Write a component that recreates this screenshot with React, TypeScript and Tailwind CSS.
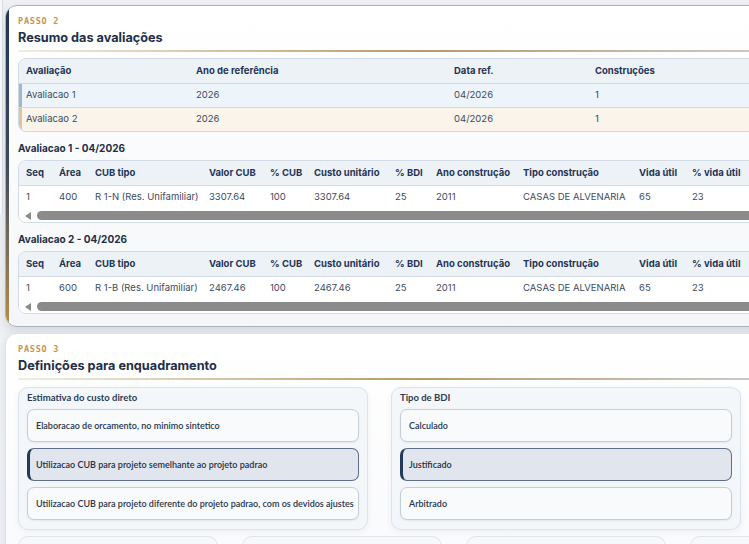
import React from "react";

const summaryCols = [
  { label: "Avaliação", w: "w-[170px]" },
  { label: "Ano de referência", w: "w-[258px]" },
  { label: "Data ref.", w: "w-[141px]" },
  { label: "Construções", w: "w-[180px]" },
];

const summaryRows = [
  { cells: ["Avaliacao 1", "2026", "04/2026", "1"], bg: "bg-[#eef5fa]", bar: "bg-[#9db8cf]" },
  { cells: ["Avaliacao 2", "2026", "04/2026", "1"], bg: "bg-[#faf4ea]", bar: "bg-[#dcc69f]" },
];

const detailCols = [
  { label: "Seq", w: "w-[33px]" },
  { label: "Área", w: "w-[36px]" },
  { label: "CUB tipo", w: "w-[114px]" },
  { label: "Valor CUB", w: "w-[61px]" },
  { label: "% CUB", w: "w-[44px]" },
  { label: "Custo unitário", w: "w-[81px]" },
  { label: "% BDI", w: "w-[41px]" },
  { label: "Ano construção", w: "w-[87px]" },
  { label: "Tipo construção", w: "w-[116px]" },
  { label: "Vida útil", w: "w-[53px]" },
  { label: "% vida útil", w: "w-[70px]" },
];

const evaluations = [
  {
    title: "Avaliacao 1 - 04/2026",
    row: ["1", "400", "R 1-N (Res. Unifamiliar)", "3307.64", "100", "3307.64", "25", "2011", "CASAS DE ALVENARIA", "65", "23"],
  },
  {
    title: "Avaliacao 2 - 04/2026",
    row: ["1", "600", "R 1-B (Res. Unifamiliar)", "2467.46", "100", "2467.46", "25", "2011", "CASAS DE ALVENARIA", "65", "23"],
  },
];

const custoOptions = [
  "Elaboracao de orcamento, no minimo sintetico",
  "Utilizacao CUB para projeto semelhante ao projeto padrao",
  "Utilizacao CUB para projeto diferente do projeto padrao, com os devidos ajustes",
];

const bdiOptions = ["Calculado", "Justificado", "Arbitrado"];

function StepHeader({ step, title }: { step: string; title: string }) {
  return (
    <div>
      <p className="font-['DejaVu_Sans_Mono',monospace] text-[8.5px] font-bold tracking-[0.09em] text-[#c8934c] leading-[12px]">
        PASSO {step}
      </p>
      <h2 className="mt-[2px] text-[12.7px] font-bold leading-[18px] text-[#1f2f47]">{title}</h2>
      <div className="mt-[3px] h-[2px] w-full bg-gradient-to-r from-[#f3ede2] via-[#b89a6a] to-[#cdd3dc]" />
    </div>
  );
}

function FakeScrollbar() {
  return (
    <div className="flex h-[13px] items-center gap-[6px] bg-white pl-[6px]">
      <div className="h-0 w-0 border-y-[4px] border-r-[6px] border-y-transparent border-r-[#8a8a8a]" />
      <div className="h-[9px] flex-1 rounded-l-full bg-[#8b8b8b]" />
    </div>
  );
}

function Option({ text, selected }: { text: string; selected?: boolean }) {
  return (
    <div
      className={
        selected
          ? "flex h-[33px] items-center rounded-[7px] border border-[#5e6f87] border-l-[3px] border-l-[#233a5b] bg-[#e1e6ee] pl-[6px] text-[9px] font-semibold text-[#1f2f47]"
          : "flex h-[33px] items-center rounded-[7px] border border-[#c3cedb] bg-[#f8fafc] pl-[8px] text-[9px] font-semibold text-[#27354d] shadow-[0_1px_2px_rgba(30,50,80,0.08)]"
      }
    >
      {text}
    </div>
  );
}

function ChoiceBox({ title, options, selected }: { title: string; options: string[]; selected: number }) {
  return (
    <div className="flex flex-col gap-[5px] rounded-[10px] border border-[#dbe3ec] bg-[#f4f7fa] px-[8px] pb-[9px] pt-[4px] shadow-[0_2px_6px_rgba(30,50,80,0.06)]">
      <p className="text-[9.5px] font-bold leading-[12px] text-[#2b3b55]">{title}</p>
      <div className="flex flex-col gap-[6px]">
        {options.map((o, i) => (
          <Option key={o} text={o} selected={i === selected} />
        ))}
      </div>
    </div>
  );
}

export default function App() {
  return (
    <div className="relative h-[544px] w-[749px] overflow-hidden bg-[#eef0f3] font-['Inter',sans-serif]">
      <div className="absolute left-0 top-0 h-[215px] w-[3px] rounded-br-[6px] border-r border-[#d6dbe2] bg-[#f6f7f9]" />
      <div className="ml-[5px] w-[820px] pt-[5px]">
        {/* step 2 */}
        <div className="flex h-[322px] overflow-hidden rounded-[12px] border border-[#aab2bf] bg-gradient-to-b from-white via-[#fafbfc] to-[#f4f6f9] shadow-[0_4px_10px_rgba(30,45,70,0.12)]">
          <div className="w-[3px] shrink-0 bg-gradient-to-b from-[#1f3556] via-[#3e4a5c] to-[#b88d45]" />
          <div className="flex-1 pl-[9px] pt-[9px]">
            <StepHeader step="2" title="Resumo das avaliações" />

            <div className="mt-[6px] overflow-hidden rounded-l-[8px] border border-[#cfd8e3] text-[9.5px]">
              <div className="flex h-[24px] items-center bg-[#edf2f7] font-bold text-[#1f3556]">
                {summaryCols.map((c) => (
                  <div key={c.label} className={`${c.w} pl-[7px]`}>
                    {c.label}
                  </div>
                ))}
              </div>
              {summaryRows.map((r) => (
                <div key={r.cells[0]} className={`relative flex h-[24px] items-center border-t border-[#cfd8e3] ${r.bg} text-[#3c4a60]`}>
                  <div className={`absolute bottom-0 left-0 top-0 w-[3px] ${r.bar}`} />
                  {r.cells.map((c, i) => (
                    <div key={i} className={`${summaryCols[i].w} pl-[7px] ${i === 3 ? "text-[#2a4366]" : ""}`}>
                      {c}
                    </div>
                  ))}
                </div>
              ))}
            </div>

            {evaluations.map((ev) => (
              <div key={ev.title}>
                <p className="mt-[9px] text-[10px] font-bold leading-[14px] text-[#1f2f47]">{ev.title}</p>
                <div className="mt-[5px] overflow-hidden rounded-l-[8px] border border-[#d3dce6] text-[9.5px]">
                  <div className="flex h-[24px] items-center bg-[#edf2f7] font-bold text-[#1f3556]">
                    {detailCols.map((c) => (
                      <div key={c.label} className={`${c.w} shrink-0 pl-[7px]`}>
                        {c.label}
                      </div>
                    ))}
                  </div>
                  <div className="flex h-[24px] items-center border-t border-[#d3dce6] bg-white text-[#3c4a60]">
                    {ev.row.map((c, i) => (
                      <div key={i} className={`${detailCols[i].w} shrink-0 pl-[7px]`}>
                        {c}
                      </div>
                    ))}
                  </div>
                  <FakeScrollbar />
                </div>
              </div>
            ))}
          </div>
        </div>

        {/* step 3 */}
        <div className="mt-[6px] rounded-[12px] border border-[#dde2e9] bg-gradient-to-b from-white to-[#f9fafc] pl-[12px] pt-[9px] shadow-[0_2px_8px_rgba(30,45,70,0.08)] font-['Lato',sans-serif]">
          <div className="font-['Inter',sans-serif]">
            <StepHeader step="3" title="Definições para enquadramento" />
          </div>
          <div className="mt-[7px] grid w-[723px] grid-cols-2 gap-[23px]">
            <ChoiceBox title="Estimativa do custo direto" options={custoOptions} selected={1} />
            <ChoiceBox title="Tipo de BDI" options={bdiOptions} selected={1} />
          </div>
          <div className="mt-[6px] flex gap-[24px]">
            {[0, 1, 2, 3].map((i) => (
              <div key={i} className="h-[30px] w-[200px] shrink-0 rounded-t-[10px] border border-[#dfe5ec] bg-[#f6f8fa]" />
            ))}
          </div>
        </div>
      </div>
    </div>
  );
}
